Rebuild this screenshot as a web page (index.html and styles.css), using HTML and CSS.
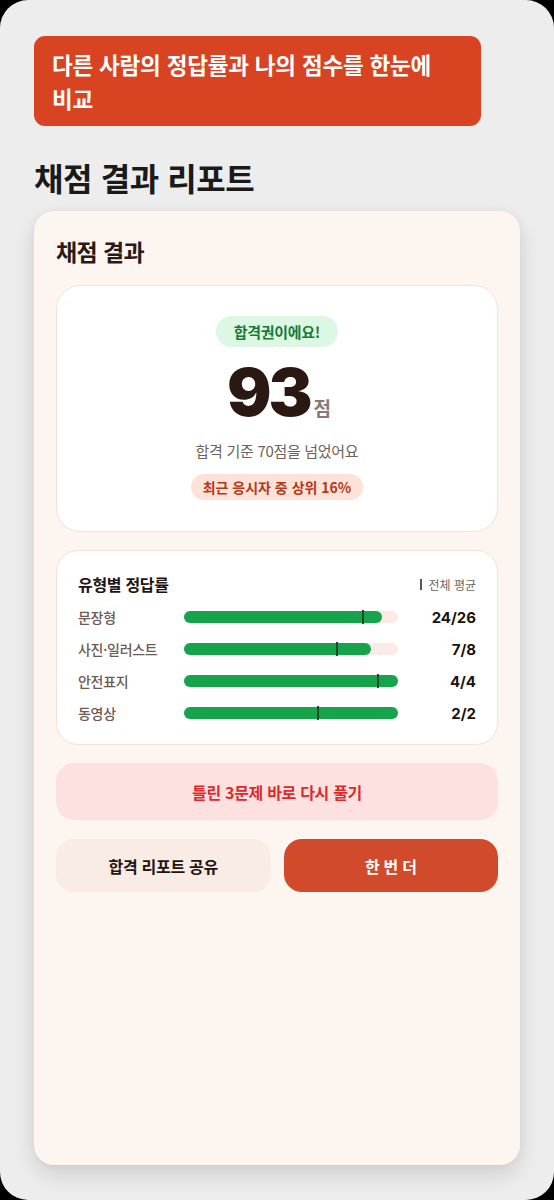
FILE: index.html
```html
<!DOCTYPE html>
<html lang="ko">
<head>
<meta charset="utf-8">
<title>채점 결과 리포트</title>
<link rel="stylesheet" href="styles.css">
</head>
<body>
<div class="frame">
  <div class="banner">다른 사람의 정답률과 나의 점수를 한눈에 비교</div>
  <h1 class="page-title">채점 결과 리포트</h1>
  <section class="card">
    <h2 class="card-title">채점 결과</h2>
    <div class="score-card">
      <span class="pass-badge">합격권이에요!</span>
      <div class="score"><span class="score-num">93</span><span class="score-unit">점</span></div>
      <p class="score-note">합격 기준 70점을 넘었어요</p>
      <span class="rank-pill">최근 응시자 중 상위 16%</span>
    </div>
    <div class="type-card">
      <div class="type-head">
        <span class="type-title">유형별 정답률</span>
        <span class="legend"><span class="legend-mark"></span>전체 평균</span>
      </div>
      <div class="rows">
        <div class="row">
          <span class="row-label">문장형</span>
          <div class="track"><div class="fill" style="width:92.3%"></div><span class="avg" style="left:83%"></span></div>
          <span class="row-value">24/26</span>
        </div>
        <div class="row">
          <span class="row-label">사진·일러스트</span>
          <div class="track"><div class="fill" style="width:87.5%"></div><span class="avg" style="left:71%"></span></div>
          <span class="row-value">7/8</span>
        </div>
        <div class="row">
          <span class="row-label">안전표지</span>
          <div class="track"><div class="fill" style="width:100%"></div><span class="avg" style="left:90%"></span></div>
          <span class="row-value">4/4</span>
        </div>
        <div class="row">
          <span class="row-label">동영상</span>
          <div class="track"><div class="fill" style="width:100%"></div><span class="avg" style="left:62%"></span></div>
          <span class="row-value">2/2</span>
        </div>
      </div>
    </div>
    <button class="retry-btn">틀린 3문제 바로 다시 풀기</button>
    <div class="btn-row">
      <button class="share-btn">합격 리포트 공유</button>
      <button class="again-btn">한 번 더</button>
    </div>
  </section>
</div>
</body>
</html>
```

FILE: styles.css
```css
html, body {
  margin: 0;
  padding: 0;
  background: #000;
}
body {
  font-family: "Noto Sans CJK KR", "Noto Sans", sans-serif;
  color: #1e1512;
}
.frame {
  width: 554px;
  height: 1200px;
  box-sizing: border-box;
  background: #ededed;
  border-radius: 28px;
  padding: 36px 34px 0;
  overflow: hidden;
}
.banner {
  width: 447px;
  box-sizing: border-box;
  background: #d84322;
  color: #fff;
  border-radius: 11px;
  padding: 11px 18px;
  font-size: 22.5px;
  font-weight: 700;
  line-height: 34px;
  letter-spacing: -0.2px;
  word-break: keep-all;
}
.page-title {
  margin: 28px 0 0;
  font-size: 32px;
  line-height: 46px;
  font-weight: 700;
  color: #1a1a1a;
  letter-spacing: -0.4px;
}
.card {
  margin-top: 11px;
  width: 486px;
  height: 954px;
  box-sizing: border-box;
  background: #fdf5f0;
  border-radius: 20px;
  padding: 24px 22px;
  box-shadow: 0 10px 22px rgba(0, 0, 0, 0.13), 0 0 8px rgba(0, 0, 0, 0.04);
  display: flex;
  flex-direction: column;
}
.card-title {
  margin: 0 0 18px;
  font-size: 23px;
  line-height: 32px;
  font-weight: 700;
  color: #2a1a15;
  letter-spacing: -0.6px;
}
.score-card {
  background: #fff;
  border: 1px solid #f3e2da;
  border-radius: 24px;
  padding: 30px 0 31px;
  display: flex;
  flex-direction: column;
  align-items: center;
}
.pass-badge {
  background: #dcf8e4;
  color: #187a38;
  font-size: 15px;
  font-weight: 700;
  line-height: 31px;
  padding: 0 18px;
  border-radius: 16px;
  letter-spacing: -0.3px;
}
.score {
  margin-top: 13px;
  display: flex;
  align-items: baseline;
  padding-left: 4px;
}
.score-num {
  font-family: Inter, "Noto Sans", sans-serif;
  font-weight: 900;
  font-size: 66px;
  line-height: 64px;
  color: #2a1813;
  letter-spacing: -3px;
}
.score-unit {
  margin-left: 4px;
  font-size: 19px;
  font-weight: 700;
  color: #8c7872;
}
.score-note {
  margin: 16px 0 0;
  font-size: 15px;
  line-height: 22px;
  color: #6e625d;
  letter-spacing: -0.3px;
}
.rank-pill {
  margin-top: 12px;
  background: #fde2d8;
  color: #b4391b;
  font-size: 14px;
  font-weight: 700;
  line-height: 26px;
  padding: 0 12px;
  border-radius: 14px;
}
.type-card {
  margin-top: 18px;
  background: #fff;
  border: 1px solid #f3e2da;
  border-radius: 22px;
  padding: 21px 21px 20px;
}
.type-head {
  display: flex;
  justify-content: space-between;
  align-items: center;
}
.type-title {
  font-size: 16px;
  font-weight: 700;
  line-height: 24px;
  color: #1e1512;
  letter-spacing: -0.3px;
}
.legend {
  display: flex;
  align-items: center;
  font-size: 12px;
  color: #6b6664;
}
.legend-mark {
  width: 2px;
  height: 11px;
  background: #555;
  margin-right: 6px;
}
.rows {
  margin-top: 10px;
  display: flex;
  flex-direction: column;
  gap: 10px;
}
.row {
  display: grid;
  grid-template-columns: 106px 214px 1fr;
  align-items: center;
  height: 22px;
}
.row-label {
  font-size: 14px;
  font-weight: 500;
  color: #6d5a53;
  letter-spacing: -0.3px;
}
.track {
  position: relative;
  height: 12px;
  background: #fbebe6;
  border-radius: 6px;
}
.fill {
  height: 100%;
  background: #17a34a;
  border-radius: 6px;
}
.avg {
  position: absolute;
  top: -1px;
  width: 2px;
  height: 14px;
  background: #1e4a2b;
}
.row-value {
  text-align: right;
  font-family: Inter, "Noto Sans", sans-serif;
  font-size: 15px;
  font-weight: 700;
  color: #1a1210;
}
.retry-btn {
  margin-top: 18px;
  height: 57px;
  border: none;
  border-radius: 18px;
  background: #fde1e1;
  color: #dc2a2a;
  font-family: inherit;
  font-size: 16px;
  font-weight: 700;
  letter-spacing: -0.3px;
}
.btn-row {
  margin-top: 19px;
  display: grid;
  grid-template-columns: 1fr 1fr;
  gap: 13px;
}
.share-btn, .again-btn {
  height: 53px;
  border: none;
  border-radius: 18px;
  font-family: inherit;
  font-size: 16px;
  font-weight: 700;
  letter-spacing: -0.3px;
}
.share-btn {
  background: #f9ece5;
  color: #1e1512;
}
.again-btn {
  background: #d14a2b;
  color: #fff;
}
```
